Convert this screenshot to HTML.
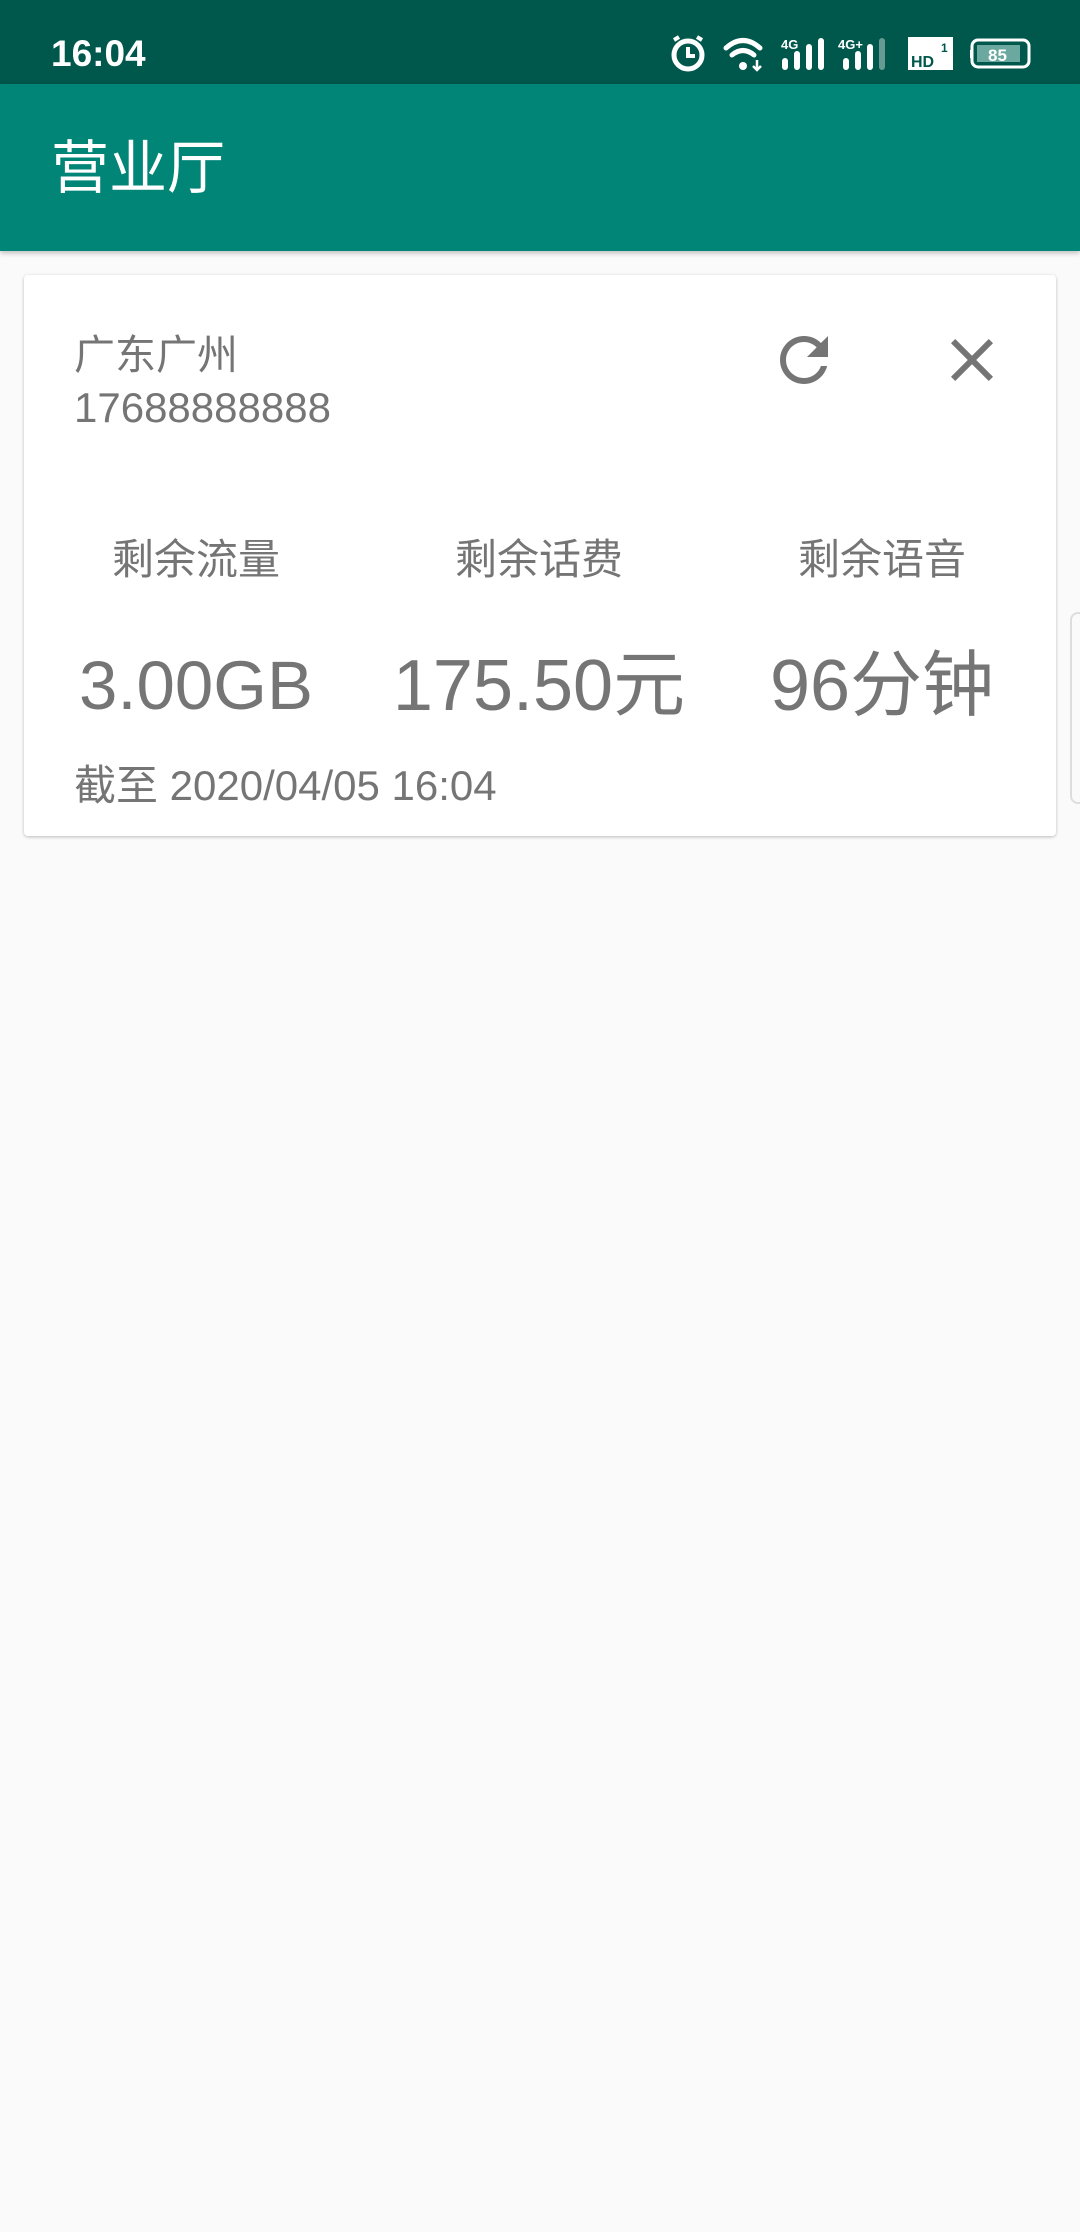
<!DOCTYPE html>
<html><head><meta charset="utf-8"><style>
*{margin:0;padding:0;box-sizing:border-box}
body{width:1080px;height:2232px;background:#fafafa;font-family:"Liberation Sans","Noto Sans CJK SC",sans-serif;position:relative;overflow:hidden;color:#757575}
.sb{position:absolute;left:0;top:0;width:1080px;height:84px;background:#00574b}
.ab{position:absolute;left:0;top:84px;width:1080px;height:167px;background:#008577;box-shadow:0 2px 5px rgba(0,0,0,.25)}
.t{position:absolute;white-space:nowrap}
.card{position:absolute;left:24px;top:275px;width:1032px;height:561px;background:#fff;border-radius:4px;box-shadow:0 1px 3px rgba(0,0,0,.25)}
.c{position:absolute;width:340px;text-align:center;white-space:nowrap}
</style></head><body>
<div class="sb"></div>
<div class="t" style="left:51px;top:32px;font-size:37px;color:#fff;font-weight:bold;line-height:44px">16:04</div>
<svg style="position:absolute;left:660px;top:30px" width="420" height="50" viewBox="660 30 420 50">
<g fill="none" stroke="#fff" stroke-width="5"><circle cx="688" cy="55" r="14"/></g>
<path d="M688 47v9h7" stroke="#fff" stroke-width="4" fill="none"/>
<path d="M674 40l5-3M702 40l-5-3" stroke="#fff" stroke-width="4"/>
<g fill="none" stroke="#fff" stroke-width="5" stroke-linecap="round"><path d="M726 48q17-15 34 0"/><path d="M732 55q11-9 22 0"/></g>
<circle cx="743" cy="66" r="4" fill="#fff"/>
<path d="M757 60v10m-4-4l4 4 4-4" stroke="#fff" stroke-width="2.5" fill="none"/>
<text x="781" y="49" font-size="13" font-weight="bold" fill="#fff" font-family="Liberation Sans">4G</text>
<g fill="#fff"><rect x="782" y="58" width="6" height="12" rx="3"/><rect x="794" y="51" width="6" height="19" rx="3"/><rect x="806" y="44" width="6" height="26" rx="3"/><rect x="818" y="38" width="6" height="32" rx="3"/></g>
<text x="838" y="49" font-size="13" font-weight="bold" fill="#fff" font-family="Liberation Sans">4G+</text>
<g fill="#fff"><rect x="843" y="58" width="6" height="12" rx="3"/><rect x="855" y="51" width="6" height="19" rx="3"/><rect x="867" y="44" width="6" height="26" rx="3"/><rect x="879" y="38" width="6" height="32" rx="3" opacity=".4"/></g>
<rect x="908" y="37" width="45" height="33" fill="#fff"/>
<text x="911" y="67" font-size="16" font-weight="bold" fill="#00574b" font-family="Liberation Sans">HD</text>
<text x="941" y="52" font-size="12" font-weight="bold" fill="#00574b" font-family="Liberation Sans">1</text>
<rect x="972" y="40" width="57" height="27" rx="6" fill="none" stroke="#fff" stroke-width="3"/>
<rect x="970" y="50" width="3" height="8" fill="#fff"/>
<rect x="977" y="45" width="43" height="17" fill="#6ba89f"/>
<text x="988" y="61" font-size="17" font-weight="bold" fill="#fff" font-family="Liberation Sans">85</text>
</svg>
<div class="ab"></div>
<div class="t" style="left:51px;top:137px;font-size:58px;color:#fff;line-height:64px">营业厅</div>
<div class="card">
<div class="t" style="left:50px;top:56px;font-size:41px;line-height:48px">广东广州</div>
<div class="t" style="left:50px;top:109px;font-size:42px;line-height:48px">17688888888</div>
<svg style="position:absolute;left:744px;top:49px" width="72" height="72" viewBox="0 0 24 24"><path fill="#757575" d="M17.65 6.35A7.958 7.958 0 0 0 12 4c-4.42 0-7.99 3.58-7.99 8s3.57 8 7.99 8c3.73 0 6.84-2.55 7.73-6h-2.08A5.99 5.99 0 0 1 12 18c-3.31 0-6-2.69-6-6s2.69-6 6-6c1.66 0 3.14.69 4.22 1.78L13 11h7V4l-2.35 2.35z"/></svg>
<svg style="position:absolute;left:912px;top:49px" width="72" height="72" viewBox="0 0 24 24"><path fill="#757575" d="M19 6.41L17.59 5 12 10.59 6.41 5 5 6.41 10.59 12 5 17.59 6.41 19 12 13.41 17.59 19 19 17.59 13.41 12z"/></svg>
<div class="c" style="left:2px;top:261px;font-size:42px;line-height:48px">剩余流量</div>
<div class="c" style="left:345px;top:261px;font-size:42px;line-height:48px">剩余话费</div>
<div class="c" style="left:688px;top:261px;font-size:42px;line-height:48px">剩余语音</div>
<div class="c" style="left:2px;top:366px;font-size:69px;line-height:90px">3.00GB</div>
<div class="c" style="left:345px;top:366px;font-size:72px;line-height:90px">175.50元</div>
<div class="c" style="left:688px;top:366px;font-size:72px;line-height:90px">96分钟</div>
<div class="t" style="left:50px;top:487px;font-size:42px;line-height:48px">截至 2020/04/05 16:04</div>
</div>
<div style="position:absolute;left:1070px;top:612px;width:20px;height:192px;border:2px solid #ddd;border-radius:8px;background:#fafafa"></div>
</body></html>
